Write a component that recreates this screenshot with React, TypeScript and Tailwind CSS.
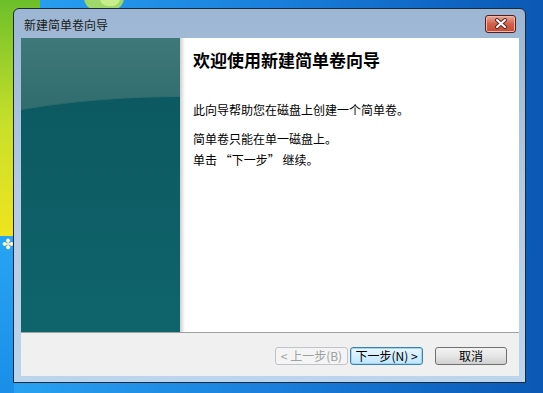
import React from 'react';

const FONT = { fontFamily: '"Noto Sans CJK SC", "Noto Sans", sans-serif' };

export default function App() {
    return (
        <div
            className="relative w-[543px] h-[393px] overflow-hidden bg-gradient-to-r from-[#2aa3f2] via-[#1a7fdc] to-[#0a58b4]"
            style={FONT}
        >
            {/* Desktop wallpaper bits */}
            <div className="absolute left-0 top-0 w-[40px] h-[250px] bg-gradient-to-b from-[#6cbf2a] via-[#c8e02a] to-[#f4e41c]" />
            <div className="absolute left-0 top-[236px] w-[14px] h-[160px] bg-gradient-to-b from-[#28a4f4] to-[#1a8ee8]" />
            <div className="absolute left-[84px] top-[-14px] w-[40px] h-[24px] rounded-full bg-[#9fd86a]" />
            <div className="absolute left-[100px] top-[-10px] w-[20px] h-[16px] rounded-full bg-[#c8ee8e]" />
            <div className="absolute left-[2px] top-[236px] text-[#fff8c0] text-[14px] leading-none">✤</div>

            <Window />
        </div>
    );
}

function Window() {
    return (
        <div className="absolute left-[13px] top-[8px] w-[513px] h-[375px] flex flex-col border border-[#1b2a3a] rounded-t-[6px] bg-gradient-to-b from-[#9cb6d3] via-[#b4cbe5] to-[#bcd4ec]">
            {/* Title bar */}
            <div className="h-[29px] shrink-0 flex items-center justify-between pl-[10px] pr-[9px]">
                <span className="text-[12px] text-[#1a1a1a] leading-none pt-[2px]">新建简单卷向导</span>
                <CloseButton />
            </div>

            {/* Client area */}
            <div className="flex-1 flex flex-col ml-[7px] mr-[6px] mb-[6px] bg-white">
                <div className="flex-1 flex">
                    <Sidebar />
                    <div className="w-[5px] bg-gradient-to-r from-[#cfcfcf] to-white" />
                    <div className="flex-1 pl-[8px] pt-[12px]">
                        <h1 className="text-[17px] font-bold text-black leading-[20px]">欢迎使用新建简单卷向导</h1>
                        <p className="text-[12px] text-black leading-[16px] mt-[32px]">此向导帮助您在磁盘上创建一个简单卷。</p>
                        <p className="text-[12px] text-black leading-[16px] mt-[13px]">简单卷只能在单一磁盘上。</p>
                        <p className="text-[12px] text-black leading-[16px] mt-[5px]">单击 “下一步” 继续。</p>
                    </div>
                </div>
                <div className="h-px bg-[#a0a0a0]" />
                <div className="h-[43px] shrink-0 bg-[#f0f0f0] flex items-start justify-end pt-[14px] pr-[12px]">
                    <button className="w-[73px] h-[18px] rounded-[3px] border border-[#c0c4c8] bg-[#f4f4f4] text-[12px] leading-none text-[#a0a0a0]">
                        &lt; 上一步(B)
                    </button>
                    <button className="ml-[2px] w-[73px] h-[18px] rounded-[3px] border border-[#3c7fb1] bg-gradient-to-b from-[#eaf6fd] to-[#bee6fd] text-[12px] leading-none text-black shadow-[inset_0_0_0_1px_#9fd5f5]">
                        下一步(N) &gt;
                    </button>
                    <button className="ml-[12px] w-[72px] h-[18px] rounded-[3px] border border-[#707070] bg-gradient-to-b from-[#f2f2f2] via-[#e6e6e6] to-[#d0d0d0] text-[12px] leading-none text-black">
                        取消
                    </button>
                </div>
            </div>
        </div>
    );
}

function Sidebar() {
    return (
        <div className="relative w-[159px] overflow-hidden bg-[#0f6870]">
            <div className="absolute left-0 top-0 w-full h-[90px] bg-gradient-to-b from-[#3f7878] to-[#2c6a6c]" />
            <div className="absolute left-[-241px] top-[58px] w-[800px] h-[320px] rounded-[50%] bg-gradient-to-b from-[#0c5961] to-[#10686f] border-t border-[#2e6c6e]" />
        </div>
    );
}

function CloseButton() {
    return (
        <div className="w-[31px] h-[18px] rounded-[3px] border border-[#5a1c1c] bg-gradient-to-b from-[#e9a99a] via-[#d0604a] to-[#c64a33] flex items-center justify-center shadow-[inset_0_0_0_1px_#f0b7a8]">
            <svg width="14" height="11" viewBox="0 0 14 11">
                <path d="M3 2 L11 9 M11 2 L3 9" stroke="#5a2a2a" strokeWidth="4" strokeLinecap="round" />
                <path d="M3 2 L11 9 M11 2 L3 9" stroke="#ffffff" strokeWidth="2" strokeLinecap="round" />
            </svg>
        </div>
    );
}
